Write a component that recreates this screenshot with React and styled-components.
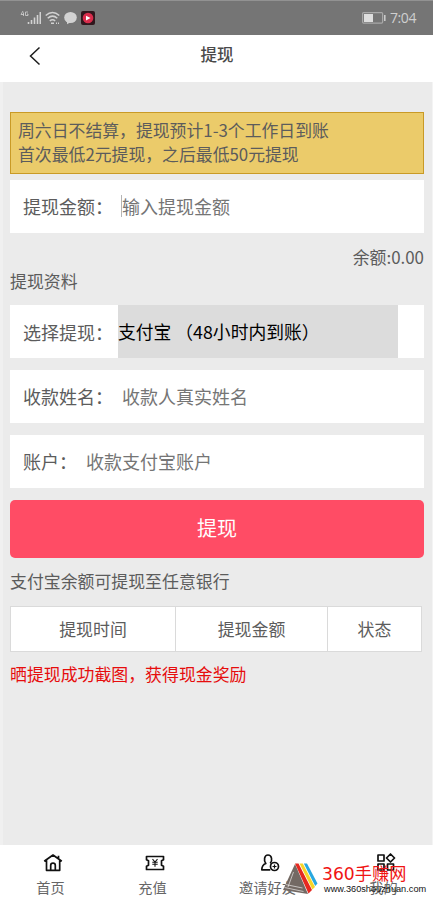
import React from 'react';
import styled, { createGlobalStyle, ThemeProvider } from 'styled-components';

const theme = {
  colors: {
    page: '#ebebeb',
    status: '#757575',
    text: '#5c5c5c',
    placeholder: '#757575',
    primary: '#ff4c65',
    danger: '#e60d0d',
    notice: '#ebcb6a',
    noticeBorder: '#c99a26',
    line: '#dadada',
  },
};

const GlobalStyle = createGlobalStyle`
  * {
    box-sizing: border-box;
  }
  body {
    margin: 0;
    font-family: 'Noto Sans CJK SC', sans-serif;
    font-weight: 400;
  }
  input, button {
    font-family: inherit;
  }
`;

const Page = styled.div`
  width: 433px;
  height: 900px;
  display: flex;
  flex-direction: column;
  overflow: hidden;
  color: ${(props) => props.theme.colors.text};
  background-color: ${(props) => props.theme.colors.page};
`;

const StatusBar = styled.div`
  flex: none;
  height: 35px;
  display: flex;
  align-items: center;
  justify-content: space-between;
  padding: 0 17px 1px 20px;
  border-top: 1px solid #929292;
  background-color: ${(props) => props.theme.colors.status};
`;

const StatusGroup = styled.div`
  display: flex;
  align-items: center;
  gap: 4px;
`;

const Clock = styled.span`
  font-family: 'Open Sans', sans-serif;
  font-size: 14px;
  line-height: 20px;
  letter-spacing: -0.4px;
  color: #cfcfcf;
`;

const Header = styled.header`
  flex: none;
  height: 47px;
  display: grid;
  grid-template-columns: 60px 1fr 60px;
  align-items: center;
  padding-bottom: 9px;
  background-color: #fff;
`;

const BackButton = styled.button`
  display: flex;
  padding: 3px 0 0 28px;
  border: 0;
  background: none;
`;

const Title = styled.h1`
  margin: 0;
  padding-left: 1px;
  font-size: 16.5px;
  font-weight: 500;
  line-height: 24px;
  text-align: center;
  color: #4a4a4a;
`;

const Content = styled.main`
  flex: 1;
  display: flex;
  flex-direction: column;
  padding: 30px 8px 0 7px;
  border-left: 3px solid #f0f0f0;
  border-right: 1px solid #f4f4f4;
`;

const Notice = styled.div`
  height: 62px;
  padding: 5px 7px;
  margin-bottom: 6px;
  border: 1px solid ${(props) => props.theme.colors.noticeBorder};
  background-color: ${(props) => props.theme.colors.notice};
  font-size: 16.85px;
  line-height: 24px;
`;

const Text = styled.div`
  margin-bottom: ${(props) => props.$gap || 0}px;
  font-size: 16.9px;
  line-height: 24px;
  text-align: ${(props) => props.$align || 'left'};
  color: ${(props) => props.$color || 'inherit'};
`;

const Field = styled.div`
  height: 53px;
  display: flex;
  align-items: center;
  padding-left: 13px;
  padding-bottom: ${(props) => props.$lift || 0}px;
  margin-bottom: 12px;
  background-color: #fff;
  font-size: 18px;
  white-space: nowrap;
`;

const Input = styled.input`
  flex: 1;
  min-width: 0;
  height: 30px;
  padding: 0;
  margin-left: 9px;
  border: 0;
  outline: 0;
  background: none;
  font-size: 18px;
  &::placeholder {
    color: ${(props) => props.theme.colors.placeholder};
  }
`;

const Caret = styled.span`
  width: 1px;
  height: 22px;
  margin: 0 -9px 0 8px;
  background-color: #b5b5b5;
`;

const Select = styled.div`
  width: 280px;
  height: 53px;
  margin-left: 5px;
  font-size: 17.8px;
  line-height: 53px;
  color: #000;
  background-color: #dcdcdc;
`;

const Submit = styled.button`
  height: 58px;
  padding: 0 0 4px;
  margin-bottom: 11px;
  border: 0;
  border-radius: 5px;
  font-size: 20px;
  color: #fff;
  background-color: ${(props) => props.theme.colors.primary};
`;

const Records = styled.div`
  width: 412px;
  height: 46px;
  display: grid;
  grid-template-columns: 164px 152px 1fr;
  margin: 13px 0 10px;
  border: 1px solid ${(props) => props.theme.colors.line};
  background-color: #fff;
`;

const RecordCell = styled.div`
  display: flex;
  align-items: center;
  justify-content: center;
  padding-bottom: 2px;
  font-size: 16.9px;
  & + & {
    border-left: 1px solid ${(props) => props.theme.colors.line};
  }
`;

const TabBar = styled.nav`
  position: relative;
  flex: none;
  height: 55px;
  display: grid;
  grid-template-columns: 101px 103px 127px 1fr;
  background-color: #fff;
`;

const Tab = styled.div`
  display: flex;
  flex-direction: column;
  align-items: center;
  gap: 4px;
  padding-top: 8px;
  padding-left: ${(props) => props.$shift || 0}px;
  font-size: 14.2px;
  line-height: 20px;
  color: #666;
  svg {
    flex: none;
    margin-left: 4px;
  }
`;

const Watermark = styled.div`
  position: absolute;
  left: 283px;
  top: 17px;
  display: flex;
`;

const WatermarkText = styled.div`
  display: flex;
  flex-direction: column;
  white-space: nowrap;
`;

const WatermarkName = styled.span`
  margin-left: 4px;
  font-family: 'DejaVu Sans', 'Noto Sans CJK SC', sans-serif;
  font-size: 17.2px;
  line-height: 24px;
  color: #f01414;
`;

const WatermarkUrl = styled.span`
  margin-top: -2px;
  margin-left: 6px;
  font-family: 'Liberation Sans', Arial, sans-serif;
  font-size: 9.2px;
  line-height: 10px;
  color: #111;
`;

const SignalIcon = () => (
  <svg width="21" height="16" viewBox="0 0 21 16" fill="none" stroke="#d2d2d2">
    <path d="M3 1 1 4.5h3M3.5 2.5V6M8 2H5.5v3.5H8V4H7" strokeWidth="0.8" />
    <path d="M8.5 14v-2M11.5 14v-4M14.5 14V7.5M17.5 14V5M20.3 14V2" strokeWidth="1.6" />
  </svg>
);

const WifiIcon = () => (
  <svg width="15" height="14" viewBox="0 0 15 14" fill="none" stroke="#d2d2d2" strokeWidth="1.5">
    <path d="M.7 4.5Q7.5-1.5 14.3 4.5M2.7 7.3Q7.5 3 12.3 7.3M4.8 10Q7.5 7.6 10.2 10" />
    <path d="M6 12.3h3M11 12.3h1M13 12.3h1" />
  </svg>
);

const ChatIcon = () => (
  <svg width="13" height="14" viewBox="0 0 13 14" fill="#d2d2d2">
    <ellipse cx="6.5" cy="6.5" rx="6.3" ry="5.6" />
    <path d="M3 10v3.3l4-2.3z" />
  </svg>
);

const PlayerIcon = () => (
  <svg width="14" height="14" viewBox="0 0 14 14">
    <rect width="14" height="14" rx="2" fill="#30171d" />
    <circle cx="7" cy="7" r="5.3" fill="#d92c4b" />
    <path d="M5 4.7 9.5 7 5 9.5z" fill="#fff" />
  </svg>
);

const BatteryIcon = () => (
  <svg width="24" height="12" viewBox="0 0 24 12">
    <rect x=".6" y=".6" width="20" height="10.5" rx="1" fill="none" stroke="#a8a8a8" strokeWidth="1.2" />
    <rect x="2" y="2" width="9" height="8" fill="#dedede" />
    <path d="M22.8 3v6" stroke="#cfcfcf" strokeWidth="1.5" />
  </svg>
);

const BackIcon = () => (
  <svg width="13" height="20" viewBox="0 0 13 20" fill="none" stroke="#1c1c1c" strokeWidth="1.5">
    <path d="M11.5 1.5 2.5 10l9 8.5" />
  </svg>
);

const TabIcon = ({ children }) => (
  <svg width="20" height="20" viewBox="0 0 20 20" fill="none" stroke="#111" strokeWidth="1.7" strokeLinejoin="round">
    {children}
  </svg>
);

const tabs = [
  {
    name: '首页',
    icon: (
      <path d="M1.2 8.3 10 2l8.8 6.3M3.5 7v10.3h13.2V7M15.5 5.5V2.8M7.7 17v-4.5a2.3 2.3 0 0 1 4.6 0V17" />
    ),
  },
  {
    name: '充值',
    icon: (
      <>
        <path d="M1.5 3.5h17v3.3l-2 1v4.4l2 1v3.3h-17v-3.3l2-1V7.8l-2-1z" />
        <path d="M7.5 6.2 10 9l2.5-2.8M7.3 9.2h5.4M7.3 11.3h5.4M10 9v4.8" strokeWidth="1.1" />
      </>
    ),
  },
  {
    name: '邀请好友',
    icon: (
      <>
        <path d="M10.3 16.8H1.8c0-4 1.2-5.2 4-6.3C3.5 7.5 4.2 2 8 2s4.8 5.5 2.2 8.3" />
        <circle cx="14.5" cy="13.5" r="4" />
        <path d="M14.5 11.5v4M12.5 13.5h4" strokeWidth="1.2" />
      </>
    ),
  },
  {
    name: '我的',
    shift: 3,
    icon: (
      <>
        <rect x="2" y="2" width="6" height="6" />
        <rect x="2" y="11" width="6" height="6" />
        <rect x="11.5" y="11" width="6" height="6" />
        <path d="m14.5 1 4 4-4 4-4-4z" />
      </>
    ),
  },
];

const WatermarkLogo = () => (
  <svg width="35" height="32" viewBox="0 0 35 32">
    <path d="M12 2 25 32 0 28z" fill="#736963" />
    <path d="M10.5 10 5 25M2.5 22.500l17 3.500M1.500 25.500l19 4" stroke="#fff" strokeWidth=".6" />
    <path d="M12 1.500h3.500L29 28l-3.500 3.500z" fill="#e52920" />
    <path d="M16.500 1.500h3.300L32 25l-2.600 2.500z" fill="#f8d427" />
    <path d="M20.800 1.500H24l10.500 20-2.300 2.500z" fill="#29a8df" />
  </svg>
);

const TextField = ({ label, placeholder, focused }) => (
  <Field as="label" $lift={2}>
    {label}
    {focused && <Caret />}
    <Input placeholder={placeholder} />
  </Field>
);

const App = () => {
  return (
    <ThemeProvider theme={theme}>
      <GlobalStyle />
      <Page>
        <StatusBar>
          <StatusGroup>
            <SignalIcon />
            <WifiIcon />
            <ChatIcon />
            <PlayerIcon />
          </StatusGroup>
          <StatusGroup>
            <BatteryIcon />
            <Clock>7:04</Clock>
          </StatusGroup>
        </StatusBar>
        <Header>
          <BackButton>
            <BackIcon />
          </BackButton>
          <Title>提现</Title>
        </Header>
        <Content>
          <Notice>
            周六日不结算，提现预计1-3个工作日到账
            <br />
            首次最低2元提现，之后最低50元提现
          </Notice>
          <TextField label="提现金额：" placeholder="输入提现金额" focused />
          <Text $align="right">余额:0.00</Text>
          <Text $gap={12}>提现资料</Text>
          <Field>
            选择提现：
            <Select>支付宝 （48小时内到账）</Select>
          </Field>
          <TextField label="收款姓名：" placeholder="收款人真实姓名" />
          <TextField label="账户：" placeholder="收款支付宝账户" />
          <Submit>提现</Submit>
          <Text>支付宝余额可提现至任意银行</Text>
          <Records>
            <RecordCell>提现时间</RecordCell>
            <RecordCell>提现金额</RecordCell>
            <RecordCell>状态</RecordCell>
          </Records>
          <Text $color={theme.colors.danger}>晒提现成功截图，获得现金奖励</Text>
        </Content>
        <TabBar>
          {tabs.map((tab) => (
            <Tab key={tab.name} $shift={tab.shift}>
              <TabIcon>{tab.icon}</TabIcon>
              {tab.name}
            </Tab>
          ))}
          <Watermark>
            <WatermarkLogo />
            <WatermarkText>
              <WatermarkName>360手赚网</WatermarkName>
              <WatermarkUrl>www.360shouzhuan.com</WatermarkUrl>
            </WatermarkText>
          </Watermark>
        </TabBar>
      </Page>
    </ThemeProvider>
  );
};

export default App;
